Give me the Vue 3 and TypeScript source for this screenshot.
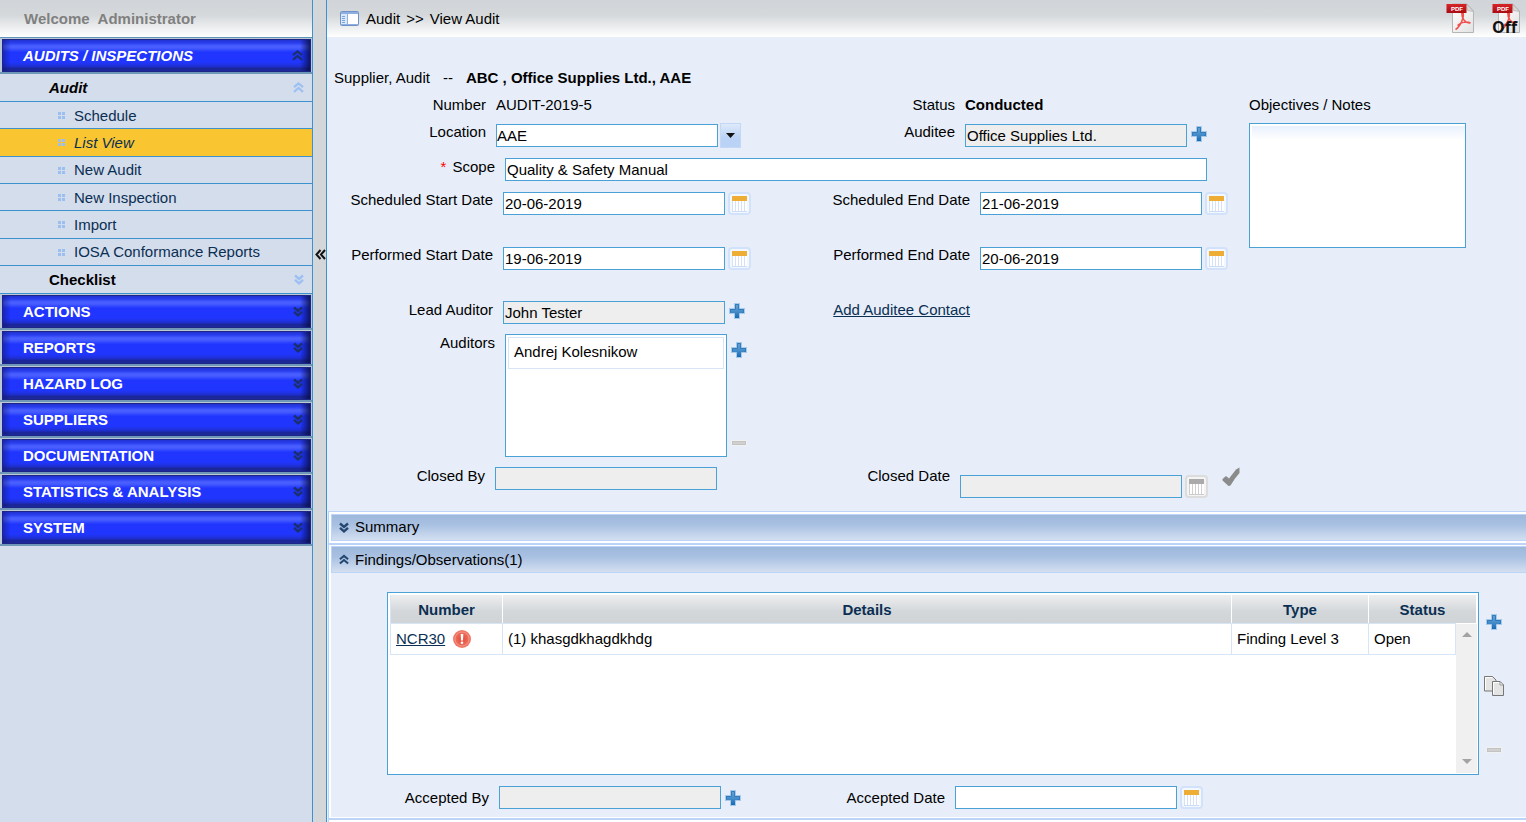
<script setup lang="ts">
import { ref } from 'vue'

interface SubItem {
  label: string
  active?: boolean
}

const auditItems: SubItem[] = [
  { label: 'Schedule' },
  { label: 'List View', active: true },
  { label: 'New Audit' },
  { label: 'New Inspection' },
  { label: 'Import' },
  { label: 'IOSA Conformance Reports' },
]

const sections: string[] = [
  'ACTIONS',
  'REPORTS',
  'HAZARD LOG',
  'SUPPLIERS',
  'DOCUMENTATION',
  'STATISTICS & ANALYSIS',
  'SYSTEM',
]

const form = ref({
  location: 'AAE',
  auditee: 'Office Supplies Ltd.',
  scope: 'Quality & Safety Manual',
  scheduledStart: '20-06-2019',
  scheduledEnd: '21-06-2019',
  performedStart: '19-06-2019',
  performedEnd: '20-06-2019',
  leadAuditor: 'John Tester',
  closedBy: '',
  closedDate: '',
  acceptedBy: '',
  acceptedDate: '',
  notes: '',
})

const auditors = ref<string[]>(['Andrej Kolesnikow'])

const findings = [
  { number: 'NCR30', details: '(1) khasgdkhagdkhdg', type: 'Finding Level 3', status: 'Open' },
]
</script>

<template>
  <div class="app">
    <svg class="sprite" aria-hidden="true">
      <defs>
        <linearGradient id="gPlus" x1="0" y1="0" x2="0" y2="1">
          <stop offset="0" stop-color="#6ba6d8" />
          <stop offset="0.5" stop-color="#4a8fca" />
          <stop offset="1" stop-color="#1467b3" />
        </linearGradient>
        <linearGradient id="gPaper" x1="0" y1="0" x2="1" y2="1">
          <stop offset="0" stop-color="#ffffff" />
          <stop offset="1" stop-color="#e2e2e2" />
        </linearGradient>
        <linearGradient id="gRed" x1="0" y1="0" x2="0" y2="1">
          <stop offset="0" stop-color="#d8262a" />
          <stop offset="1" stop-color="#a80c12" />
        </linearGradient>
        <radialGradient id="gAlert">
          <stop offset="0.3" stop-color="#e85644" />
          <stop offset="1" stop-color="#f07c6a" />
        </radialGradient>
      </defs>
      <symbol id="down" viewBox="0 0 10 11">
        <path d="M1 1.5 5 5 9 1.5M1 5.8 5 9.3 9 5.8" fill="none" stroke="currentColor" stroke-width="2.4" />
      </symbol>
      <symbol id="up" viewBox="0 0 11 11">
        <path d="M1 5.2 5.5 1.5 10 5.2M1 9.8 5.5 6 10 9.8" fill="none" stroke="currentColor" stroke-width="2.2" />
      </symbol>
      <symbol id="plus" viewBox="0 0 16 16">
        <path d="M5 0H11V5H16V11H11V16H5V11H0V5H5Z" fill="#c5daf0" />
        <path d="M5.500 0.500H10.500V5.500H15.500V10.500H10.500V15.500H5.500V10.500H0.500V5.500H5.500Z" fill="url(#gPlus)" stroke="#a9c9e8" />
        <path d="M6.500 6V1.500H9.500V6.500H14.500V9.500H13M6.500 6.500H1.500V9.500" fill="none" stroke="#2f7bbd" />
      </symbol>
      <symbol id="minus" viewBox="0 0 16 6">
        <rect width="16" height="6" rx="1" fill="#f1f1ef" />
        <rect x="1" y="1" width="14" height="4" fill="#c3c3c3" />
        <rect x="2" y="2" width="12" height="2" fill="#d0d0d0" />
      </symbol>
      <symbol id="pdf" viewBox="0 0 28 31">
        <path d="M6.500 1H21L27.500 8V29.500H6.500Z" fill="url(#gPaper)" stroke="#b5b5b5" />
        <path d="M20.500 1 21.500 7.500 27.500 8.500Z" fill="#d9d9d9" stroke="#b5b5b5" stroke-width="0.8" />
        <path d="M16 9.500C17.500 9 17.800 12 16.800 15.500 15.300 20.500 12 25.500 9.500 26.500M15.800 10C15.600 14.500 18.500 20.500 24.500 20M11.500 22.500C14.500 19.500 20 18 24.500 20" fill="none" stroke="#f0504e" stroke-width="1.5" />
        <rect x="0.500" y="1" width="20" height="9" fill="url(#gRed)" />
      </symbol>
    </svg>

    <aside class="sidebar">
      <div class="welcome"><span>Welcome</span><span>Administrator</span></div>
      <nav>
        <button class="section open" type="button">
          <span class="face">AUDITS / INSPECTIONS<svg class="chev up"><use href="#up" /></svg></span>
        </button>
        <button class="group italic" type="button">Audit<svg class="chev up"><use href="#up" /></svg></button>
        <ul class="submenu">
          <li v-for="item in auditItems" :key="item.label" :class="{ active: item.active }">
            <a href="#">
              <svg class="dots" viewBox="0 0 7 7">
                <path d="M0 0H3V3H0ZM4 0H7V3H4ZM0 4H3V7H0ZM4 4H7V7H4Z" fill="#9dbff0" />
              </svg>
              {{ item.label }}
            </a>
          </li>
        </ul>
        <button class="group" type="button">Checklist<svg class="chev"><use href="#down" /></svg></button>
        <button v-for="name in sections" :key="name" class="section" type="button">
          <span class="face">{{ name }}<svg class="chev"><use href="#down" /></svg></span>
        </button>
      </nav>
    </aside>

    <button class="splitter" type="button" aria-label="Collapse menu">
      <svg viewBox="0 0 11 11">
        <path d="M5.500 1 1.500 5.500 5.500 10M10 1 6 5.500 10 10" fill="none" stroke="#111" stroke-width="2" />
      </svg>
    </button>

    <main class="main">
      <header class="topbar">
        <svg class="page-icon" viewBox="0 0 19 15">
          <rect x="0.500" y="0.500" width="18" height="14" rx="1" fill="#fff" stroke="#6f93c9" />
          <rect x="1" y="1" width="17" height="2" fill="#8fb0df" />
          <rect x="1" y="3" width="6" height="11" fill="#dbe8fa" />
          <path d="M7.500 3V14M1 13.500H18" stroke="#8fb0df" />
          <path d="M2 5.500H5M2 7.500H5M2 9.500H5M2 11.500H5" stroke="#7ea3d8" />
        </svg>
        <span>Audit</span><span>&gt;&gt;</span><span>View Audit</span>
        <div class="pdf-tools">
          <button class="icon pdf" type="button" aria-label="PDF">
            <svg><use href="#pdf" /></svg><span class="tag">PDF</span>
          </button>
          <button class="icon pdf" type="button" aria-label="PDF off">
            <svg><use href="#pdf" /></svg><span class="tag">PDF</span><span class="off">Off</span>
          </button>
        </div>
      </header>

      <div class="title"><span>Supplier, Audit</span><span>--</span><strong>ABC , Office Supplies Ltd., AAE</strong></div>

      <div class="form">
        <div class="form-main">
          <div class="row number">
            <div class="pair near"><span class="lbl">Number</span><span>AUDIT-2019-5</span></div>
            <div class="pair near"><span class="lbl">Status</span><strong>Conducted</strong></div>
          </div>

          <div class="row location">
            <div class="pair near">
              <label class="lbl" for="location">Location</label>
              <select id="location" v-model="form.location" class="field"><option>AAE</option></select>
              <span class="drop"><svg viewBox="0 0 9 5"><path d="M0 0H9L4.500 5Z" fill="#111" /></svg></span>
            </div>
            <div class="pair near">
              <label class="lbl" for="auditee">Auditee</label>
              <input id="auditee" v-model="form.auditee" class="field" type="text" readonly />
              <button class="icon plus" type="button" aria-label="Select auditee"><svg><use href="#plus" /></svg></button>
            </div>
          </div>

          <div class="row flush scope">
            <label class="lbl" for="scope"><i>*</i>Scope</label>
            <input id="scope" v-model="form.scope" class="field" type="text" />
          </div>

          <div class="row dates">
            <div class="pair">
              <label class="lbl" for="schedStart">Scheduled Start Date</label>
              <input id="schedStart" v-model="form.scheduledStart" class="field" type="text" />
              <button class="cal" type="button" aria-label="Pick scheduled start date"><i></i></button>
            </div>
            <div class="pair">
              <label class="lbl" for="schedEnd">Scheduled End Date</label>
              <input id="schedEnd" v-model="form.scheduledEnd" class="field" type="text" />
              <button class="cal" type="button" aria-label="Pick scheduled end date"><i></i></button>
            </div>
          </div>

          <div class="row dates">
            <div class="pair">
              <label class="lbl" for="perfStart">Performed Start Date</label>
              <input id="perfStart" v-model="form.performedStart" class="field" type="text" />
              <button class="cal" type="button" aria-label="Pick performed start date"><i></i></button>
            </div>
            <div class="pair">
              <label class="lbl" for="perfEnd">Performed End Date</label>
              <input id="perfEnd" v-model="form.performedEnd" class="field" type="text" />
              <button class="cal" type="button" aria-label="Pick performed end date"><i></i></button>
            </div>
          </div>

          <div class="row flush lead">
            <div class="pair">
              <label class="lbl" for="lead">Lead Auditor</label>
              <input id="lead" v-model="form.leadAuditor" class="field" type="text" readonly />
              <button class="icon plus" type="button" aria-label="Select lead auditor"><svg><use href="#plus" /></svg></button>
            </div>
            <div class="pair"><span class="lbl"><a class="link" href="#">Add Auditee Contact</a></span></div>
          </div>

          <div class="row flush auditors">
            <span id="auditorsLabel" class="lbl">Auditors</span>
            <ul class="listbox" aria-labelledby="auditorsLabel">
              <li v-for="name in auditors" :key="name">{{ name }}</li>
            </ul>
            <div class="list-tools">
              <button class="icon" type="button" aria-label="Add auditor"><svg class="i-plus"><use href="#plus" /></svg></button>
              <button class="icon" type="button" aria-label="Remove auditor"><svg class="i-minus"><use href="#minus" /></svg></button>
            </div>
          </div>

          <div class="row flush closed">
            <div class="pair">
              <label class="lbl" for="closedBy">Closed By</label>
              <input id="closedBy" v-model="form.closedBy" class="field" type="text" readonly />
            </div>
            <div class="pair">
              <label class="lbl" for="closedDate">Closed Date</label>
              <div class="lowered">
                <input id="closedDate" v-model="form.closedDate" class="field" type="text" readonly />
                <button class="cal off-cal" type="button" aria-label="Pick closed date" disabled><i></i></button>
              </div>
              <button class="icon check" type="button" aria-label="Close audit">
                <svg viewBox="0 0 18 19">
                  <path d="M0.500 12 4 9 7 11.500 14 2.500 17.500 0.500V6L13 11.500 8.500 18.500 6.500 19 0.500 13.500Z" fill="#8b8b8b" />
                </svg>
              </button>
            </div>
          </div>
        </div>

        <div class="notes">
          <label for="notes">Objectives / Notes</label>
          <textarea id="notes" v-model="form.notes"></textarea>
        </div>
      </div>

      <div class="panels">
        <section class="panel first">
          <button class="bar" type="button"><svg class="chev"><use href="#down" /></svg>Summary</button>
        </section>

        <section class="panel">
          <button class="bar" type="button"><svg class="chev"><use href="#up" /></svg>Findings/Observations(1)</button>
          <div class="panel-body">
            <div class="grid-row">
              <div class="grid-box">
                <table>
                  <colgroup>
                    <col class="c-num" /><col /><col class="c-type" /><col class="c-status" /><col class="c-bar" />
                  </colgroup>
                  <thead>
                    <tr><th>Number</th><th>Details</th><th>Type</th><th colspan="2">Status</th></tr>
                  </thead>
                  <tbody>
                    <tr v-for="f in findings" :key="f.number">
                      <td>
                        <span class="num">
                          <a class="link" href="#">{{ f.number }}</a>
                          <svg class="alert" viewBox="0 0 18 18">
                            <circle cx="9" cy="9" r="9" fill="url(#gAlert)" />
                            <circle cx="9" cy="9" r="7" fill="none" stroke="#f5a093" stroke-width="0.8" />
                            <path d="M7.700 4H10.300L10 10.500H8Z" fill="#fff" />
                            <circle cx="9" cy="12.800" r="1.300" fill="#fff" />
                          </svg>
                        </span>
                      </td>
                      <td>{{ f.details }}</td>
                      <td>{{ f.type }}</td>
                      <td>{{ f.status }}</td>
                    </tr>
                  </tbody>
                </table>
                <div class="scroll">
                  <svg viewBox="0 0 10 5"><path d="M0 5H10L5 0Z" fill="#a3a3a3" /></svg>
                  <svg viewBox="0 0 10 5"><path d="M0 0H10L5 5Z" fill="#a3a3a3" /></svg>
                </div>
              </div>
              <div class="grid-tools">
                <button class="icon" type="button" aria-label="Add finding"><svg class="i-plus"><use href="#plus" /></svg></button>
                <button class="icon" type="button" aria-label="Copy finding">
                  <svg class="i-copy" viewBox="0 0 20 20">
                    <path d="M0.500 0.500H8.500L12 4V15H0.500Z" fill="#e4e4e4" stroke="#777" />
                    <path d="M1.500 14V1.500H8" fill="none" stroke="#fff" />
                    <path d="M8.500 5.500H16L19.500 9V19.500H8.500Z" fill="#e4e4e4" stroke="#777" />
                    <path d="M9.500 18V6.500H15.500" fill="none" stroke="#fff" />
                    <path d="M16 5.500V9H19.500Z" fill="#fff" stroke="#777" stroke-width="0.7" />
                  </svg>
                </button>
                <button class="icon" type="button" aria-label="Remove finding"><svg class="i-minus"><use href="#minus" /></svg></button>
              </div>
            </div>

            <div class="row accepted">
              <div class="pair">
                <label class="lbl" for="acceptedBy">Accepted By</label>
                <input id="acceptedBy" v-model="form.acceptedBy" class="field" type="text" readonly />
                <button class="icon plus" type="button" aria-label="Select accepting person"><svg><use href="#plus" /></svg></button>
              </div>
              <div class="pair">
                <label class="lbl" for="acceptedDate">Accepted Date</label>
                <input id="acceptedDate" v-model="form.acceptedDate" class="field" type="text" />
                <button class="cal" type="button" aria-label="Pick accepted date"><i></i></button>
              </div>
            </div>
          </div>
        </section>
        <section class="panel"></section>
      </div>
    </main>
  </div>
</template>

<style>
body {
  margin: 0;
  overflow: hidden;
}
</style>

<style scoped>
.app,
.app * {
  box-sizing: border-box;
}
.app {
  display: flex;
  height: 100vh;
  overflow: hidden;
  font: 15px/18px "Liberation Sans", Arial, sans-serif;
  color: #000;
}
.app button,
.app input,
.app select,
.app textarea {
  font: inherit;
  color: inherit;
  margin: 0;
}
.sprite {
  position: absolute;
  width: 0;
  height: 0;
}
ul {
  list-style: none;
  margin: 0;
  padding: 0;
}
svg {
  display: block;
  flex: none;
}
.chev {
  width: 10px;
  height: 11px;
}
.chev.up {
  width: 11px;
}

/* Sidebar */
.sidebar {
  width: 313px;
  flex: none;
  background: #d4ddec;
  border-right: 1px solid #3c92cf;
}
.welcome,
.topbar {
  height: 38px;
  background: linear-gradient(#d1d5d9 0%, #d4d8db 40%, #fff 100%);
}
.welcome {
  display: flex;
  align-items: center;
  gap: 8px;
  padding-left: 24px;
  border-bottom: 1px solid #5e94b8;
  font-weight: bold;
  color: #808080;
}
.section {
  display: block;
  width: 100%;
  height: 36px;
  padding: 1px 1px 0 2px;
  border: 0;
  border-bottom: 2px solid #6f98b8;
  background: #bcc8d8;
}
.app .face {
  display: flex;
  align-items: center;
  justify-content: space-between;
  height: 33px;
  padding: 0 7px 0 20px;
  border: 1px solid #1b2687;
  color: #fff;
  font-weight: bold;
  background:
    linear-gradient(90deg, rgba(15, 22, 120, 0.5), rgba(15, 22, 120, 0) 8px),
    linear-gradient(270deg, rgba(8, 12, 70, 0.8), rgba(8, 12, 70, 0) 10px),
    linear-gradient(#2233d0 0, #2a3ef0 3px, #4a60ff 6px, #465cff 8px, #2036ff 12px, #2036ff 22px, #1f30d8 26px, #1b2590 29px, #1f2ba0 31px);
}
.open .face,
.italic {
  font-style: italic;
}
.face .chev {
  color: #1b2f6e;
}
.app .group {
  display: flex;
  align-items: center;
  justify-content: space-between;
  width: 100%;
  height: 28px;
  padding: 0 8px 0 49px;
  border: 0;
  border-bottom: 1px solid #3c92cf;
  background: none;
  font-weight: bold;
}
.app .italic {
  font-style: italic;
}
.group .chev {
  color: #9dc0f3;
}
.submenu {
  display: grid;
  grid-template-rows: repeat(6, 1fr);
  height: 164px;
}
.submenu li {
  display: flex;
  border-bottom: 1px solid #3c92cf;
}
.submenu a {
  display: flex;
  flex: 1;
  align-items: center;
  gap: 9px;
  padding: 1px 0 0 58px;
  color: #0b2f52;
  text-decoration: none;
}
.submenu .active {
  background: #f9c632;
  font-style: italic;
}
.dots {
  width: 7px;
  height: 7px;
}
.splitter {
  display: flex;
  align-items: center;
  flex: none;
  width: 14px;
  padding: 0 0 314px 2px;
  border: 0;
  border-right: 1px solid #3c92cf;
  background: #d3d7da;
}
.splitter svg {
  width: 11px;
  height: 11px;
}

/* Main area */
.main {
  flex: 1;
  min-width: 0;
  background: #e7eef9;
}
.topbar {
  display: flex;
  align-items: center;
  gap: 6px;
  height: 37px;
  padding: 0 6px 0 13px;
}
.page-icon {
  width: 19px;
  height: 15px;
  margin-right: 1px;
}
.pdf-tools {
  display: flex;
  gap: 18px;
  margin-left: auto;
}
.icon {
  display: block;
  padding: 0;
  border: 0;
  background: none;
}
.pdf {
  position: relative;
}
.pdf svg {
  width: 28px;
  height: 31px;
}
.tag {
  position: absolute;
  left: 5px;
  top: 2px;
  color: #fff;
  font: bold 6px/8px "Liberation Sans", Arial, sans-serif;
}
.off {
  position: absolute;
  left: 0;
  bottom: 0;
  color: #111;
  font: bold 16px/14px "Open Sans", "Liberation Sans", sans-serif;
}
.title {
  display: flex;
  gap: 13px;
  padding: 32px 0 9px 7px;
}
.form {
  display: grid;
  grid-template-columns: minmax(0, 912px) 217px;
  gap: 10px;
}
.row {
  display: flex;
  align-items: flex-start;
}
.pair {
  display: flex;
  align-items: flex-start;
}
.pair:first-child {
  flex: none;
  width: 424px;
}
.lbl {
  flex: none;
  margin-right: 10px;
  text-align: right;
}
.pair .lbl {
  width: 166px;
}
.pair + .pair .lbl {
  width: 219px;
}
.near .lbl {
  width: 159px;
}
.near + .near .lbl {
  width: 204px;
}
.field {
  flex: none;
  width: 222px;
  height: 23px;
  padding: 0 1px;
  border: 1px solid #4aa1d6;
  border-radius: 0;
  background: #fff;
  outline: none;
  appearance: none;
}
.app .row .field {
  margin-top: 1px;
}
.app .flush .field {
  margin-top: 0;
}
.field[readonly] {
  background: #eee;
}
select.field {
  padding: 0;
}
.number {
  height: 27px;
}
.location {
  height: 35px;
}
.drop {
  display: flex;
  align-items: center;
  justify-content: center;
  width: 21px;
  height: 25px;
  margin-left: 2px;
  border: 1px solid #c3d8f5;
  background: linear-gradient(#dfeafa, #b9d2f6 60%);
}
.drop svg {
  width: 9px;
  height: 5px;
}
.app .plus {
  margin: 3px 0 0 4px;
}
.app .flush .plus {
  margin-top: 2px;
}
.plus svg,
.i-plus {
  width: 16px;
  height: 16px;
}
.i-minus {
  width: 16px;
  height: 6px;
}
.i-copy {
  width: 20px;
  height: 20px;
}
.scope {
  height: 33px;
  padding-right: 32px;
}
.scope .lbl,
.auditors .lbl {
  width: 168px;
}
.lbl i {
  margin-right: 6px;
  color: #f00;
  font-style: normal;
}
.scope .field {
  flex: 1;
}
.dates {
  height: 55px;
}
.app .cal {
  display: block;
  flex: none;
  width: 23px;
  height: 23px;
  margin: 1px 0 0 3px;
  padding: 1px 2px;
  border: 2px solid #d2e2fa;
  border-radius: 4px;
  background: #f3f8ff;
}
.cal i {
  display: block;
  width: 15px;
  height: 16px;
  border-top: 5px solid #eeae36;
  border-bottom: 1px solid #cddcf5;
  background: repeating-linear-gradient(90deg, #d5e1f7 0, #d5e1f7 1px, #fff 1px, #fff 3px);
}
.app .off-cal {
  margin-top: 0;
  border-color: #dcdcdc;
  background: #f4f4f4;
}
.off-cal i {
  border-top-color: #aaa;
  border-bottom-color: #ccc;
  background: repeating-linear-gradient(90deg, #d0d0d0 0, #d0d0d0 1px, #fff 1px, #fff 3px);
}
.lead {
  height: 33px;
}
.link {
  color: #0b2f52;
  text-decoration: underline;
}
.auditors {
  height: 133px;
}
.listbox {
  width: 222px;
  height: 123px;
  padding: 2px;
  border: 1px solid #4aa1d6;
  background: #fff;
}
.listbox li {
  padding: 5px 5px 7px;
  border: 1px solid #d6e6f7;
}
.list-tools {
  display: flex;
  flex-direction: column;
  justify-content: space-between;
  height: 112px;
  padding-top: 8px;
  margin-left: 4px;
}
.closed {
  height: 44px;
}
.closed .pair .lbl {
  width: 158px;
}
.closed .pair + .pair .lbl {
  width: 199px;
}
.lowered {
  display: flex;
  padding-top: 8px;
}
.app .check {
  margin-left: 14px;
}
.check svg {
  width: 18px;
  height: 19px;
}
.notes label {
  display: block;
  margin-bottom: 9px;
}
.notes textarea {
  display: block;
  width: 100%;
  height: 125px;
  padding: 4px;
  border: 1px solid #4aa1d6;
  outline: 0;
  resize: none;
  background: linear-gradient(#e9f1fd, #fff) 2px 2px / 100% 14px no-repeat #fff;
}

/* Collapsible panels */
.panels {
  margin-left: 1px;
  border-left: 1px solid #bcd4f7;
}
.panel {
  padding: 1px 0 1px 2px;
  border-top: 2px solid #bcd4f7;
  background: #fff;
}
.panel.first {
  padding: 2px 0 2px 2px;
  border-top-width: 1px;
}
.bar {
  display: flex;
  align-items: center;
  width: 100%;
  height: 27px;
  gap: 6px;
  padding: 0 7px;
  border: 1px solid #bcd4f7;
  border-right: 0;
  background: linear-gradient(#9db8dc, #a9c1e2 40%, #d3dff0);
}
.first .bar {
  padding-bottom: 1px;
}
.bar .chev {
  color: #24466f;
}
.panel-body {
  padding: 19px 22px 8px 56px;
  background: #e7eef9;
}
.grid-row {
  display: flex;
  gap: 5px;
}
.grid-box {
  position: relative;
  flex: 1;
  height: 183px;
  padding: 2px;
  border: 1px solid #4aa1d6;
  background: #fff;
}
table {
  width: 100%;
  table-layout: fixed;
  border-collapse: separate;
  border-spacing: 0;
}
.c-num {
  width: 113px;
}
.c-type {
  width: 137px;
}
.c-status {
  width: 87px;
}
.c-bar {
  width: 20px;
}
th {
  height: 28px;
  padding: 2px 5px 0;
  border-right: 1px solid #fff;
  background: linear-gradient(#edeeef, #d3d7da 60%, #d0d4d7);
  color: #0b2f52;
}
th:first-child {
  border-left: 1px solid #d6e6f7;
}
th:last-child {
  border-right: 0;
}
td {
  height: 32px;
  padding: 0 5px;
  border: 1px solid #d6e6f7;
  border-left: 0;
}
td:first-child {
  border-left: 1px solid #d6e6f7;
}
.num {
  display: flex;
  align-items: center;
  gap: 8px;
}
.alert {
  width: 18px;
  height: 18px;
}
.scroll {
  position: absolute;
  top: 31px;
  right: 1px;
  bottom: 1px;
  width: 21px;
  display: flex;
  flex-direction: column;
  align-items: center;
  justify-content: space-between;
  padding: 8px 0 9px;
  background: #f0f0f0;
}
.scroll svg {
  width: 10px;
  height: 5px;
}
.grid-tools {
  display: flex;
  flex-direction: column;
  gap: 44px;
  width: 20px;
  padding-top: 20px;
}
.grid-tools .icon {
  display: flex;
  align-items: center;
  justify-content: center;
  height: 20px;
}
.accepted {
  padding-top: 10px;
}
.accepted .lbl {
  padding-top: 4px;
}
.accepted .pair:first-child {
  margin-left: -56px;
}
.accepted .pair .lbl {
  width: 158px;
}
.accepted .pair + .pair .lbl {
  width: 190px;
}
.app .accepted .plus {
  margin-top: 5px;
}
</style>
